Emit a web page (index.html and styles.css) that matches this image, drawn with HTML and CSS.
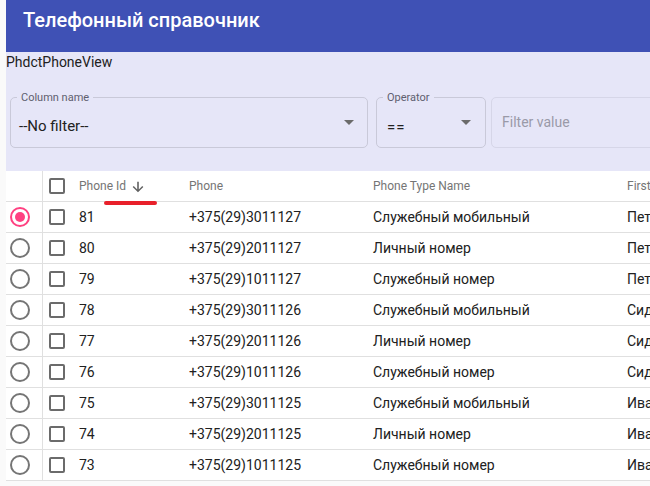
FILE: index.html
```html
<!DOCTYPE html>
<html lang="ru">
<head>
<meta charset="utf-8">
<link rel="stylesheet" href="styles.css">
</head>
<body>
<div class="page">
  <header class="toolbar"><h1 class="title">Телефонный справочник</h1></header>
  <section class="filters">
    <div class="view-name">PhdctPhoneView</div>
    <div class="filter-row">
      <div class="field field-column">
        <span class="field-label">Column name</span>
        <span class="field-value">--No filter--</span>
        <span class="caret"></span>
      </div>
      <div class="field field-operator">
        <span class="field-label">Operator</span>
        <span class="field-value">==</span>
        <span class="caret"></span>
      </div>
      <div class="field field-filter">
        <span class="placeholder">Filter value</span>
      </div>
    </div>
  </section>
  <div class="table-wrap">
    <table class="grid">
      <colgroup>
        <col class="c-radio"><col class="c-check"><col class="c-id"><col class="c-phone"><col class="c-type"><col class="c-first">
      </colgroup>
      <thead>
        <tr>
          <th class="radio-cell"></th>
          <th class="check-cell"><span class="checkbox"></span></th>
          <th><span class="sort">Phone Id
            <svg class="sort-arrow" viewBox="0 0 24 24" width="16" height="16"><path d="M20 12l-1.6-1.6L13.2 15.6V4h-2.4v11.6L5.6 10.4 4 12l8 8 8-8z" fill="#616161"/></svg></span></th>
          <th>Phone</th>
          <th>Phone Type Name</th>
          <th>First</th>
        </tr>
      </thead>
      <tbody>
        <tr><td class="radio-cell"><span class="radio checked"></span></td><td class="check-cell"><span class="checkbox"></span></td><td>81</td><td>+375(29)3011127</td><td>Служебный мобильный</td><td>Пет</td></tr>
        <tr><td class="radio-cell"><span class="radio"></span></td><td class="check-cell"><span class="checkbox"></span></td><td>80</td><td>+375(29)2011127</td><td>Личный номер</td><td>Пет</td></tr>
        <tr><td class="radio-cell"><span class="radio"></span></td><td class="check-cell"><span class="checkbox"></span></td><td>79</td><td>+375(29)1011127</td><td>Служебный номер</td><td>Пет</td></tr>
        <tr><td class="radio-cell"><span class="radio"></span></td><td class="check-cell"><span class="checkbox"></span></td><td>78</td><td>+375(29)3011126</td><td>Служебный мобильный</td><td>Сид</td></tr>
        <tr><td class="radio-cell"><span class="radio"></span></td><td class="check-cell"><span class="checkbox"></span></td><td>77</td><td>+375(29)2011126</td><td>Личный номер</td><td>Сид</td></tr>
        <tr><td class="radio-cell"><span class="radio"></span></td><td class="check-cell"><span class="checkbox"></span></td><td>76</td><td>+375(29)1011126</td><td>Служебный номер</td><td>Сид</td></tr>
        <tr><td class="radio-cell"><span class="radio"></span></td><td class="check-cell"><span class="checkbox"></span></td><td>75</td><td>+375(29)3011125</td><td>Служебный мобильный</td><td>Ива</td></tr>
        <tr><td class="radio-cell"><span class="radio"></span></td><td class="check-cell"><span class="checkbox"></span></td><td>74</td><td>+375(29)2011125</td><td>Личный номер</td><td>Ива</td></tr>
        <tr><td class="radio-cell"><span class="radio"></span></td><td class="check-cell"><span class="checkbox"></span></td><td>73</td><td>+375(29)1011125</td><td>Служебный номер</td><td>Ива</td></tr>
      </tbody>
    </table>
    <span class="mark"></span>
  </div>
</div>
</body>
</html>
```
FILE: styles.css
```css
html, body {
  margin: 0;
  padding: 0;
  height: 100%;
  overflow: hidden;
  background: #fafafa;
  font-family: Roboto, "Noto Sans", sans-serif;
}
.page {
  margin-left: 6px;
  width: 644px;
  overflow: hidden;
}
.toolbar {
  background: #3f51b5;
  height: 52px;
  padding: 8px 17px 0;
  box-sizing: border-box;
}
.title {
  margin: 0;
  color: #fff;
  font-size: 20px;
  font-weight: 500;
  line-height: 24px;
}
.filters {
  background: #e6e6f8;
  height: 119px;
  box-sizing: border-box;
  padding-top: 2px;
}
.view-name {
  font-size: 14px;
  line-height: 16px;
  color: #212121;
}
.filter-row {
  display: flex;
  gap: 5px;
  margin-top: 27px;
  padding-left: 4px;
}
.field {
  position: relative;
  height: 51px;
  border: 1px solid #c9c9d9;
  border-radius: 5px;
  box-sizing: border-box;
  flex: none;
}
.field-column { width: 358px; }
.field-operator { width: 110px; margin-left: 3px; }
.field-filter { width: 200px; border-color: #d6d6e8; }
.field-label {
  position: absolute;
  top: -7px;
  left: 6px;
  padding: 0 4px;
  background: #e6e6f8;
  font-size: 11px;
  line-height: 14px;
  color: #5f5f6f;
}
.field-value {
  position: absolute;
  left: 8px;
  top: 19px;
  font-size: 15px;
  line-height: 18px;
  color: #212121;
}
.field-operator .field-value { left: 10px; top: 20px; letter-spacing: 1px; }
.caret {
  position: absolute;
  right: 13px;
  top: 22px;
  width: 0;
  height: 0;
  border-left: 5px solid transparent;
  border-right: 5px solid transparent;
  border-top: 5px solid #6b6b6b;
}
.field-operator .caret { right: 14px; }
.placeholder {
  position: absolute;
  left: 10px;
  top: 16px;
  font-size: 14px;
  line-height: 16px;
  color: #9a9aa8;
}
.table-wrap {
  position: relative;
  background: #fff;
}
.grid {
  border-collapse: collapse;
  table-layout: fixed;
  width: 821px;
}
.c-radio { width: 36px; }
.c-check { width: 37px; }
.c-id { width: 110px; }
.c-phone { width: 184px; }
.c-type { width: 254px; }
.c-first { width: 200px; }
.grid th, .grid td {
  height: 30px;
  padding: 0;
  border-bottom: 1px solid #e0e0e0;
  text-align: left;
  white-space: nowrap;
  vertical-align: middle;
}
.grid th {
  font-size: 12px;
  font-weight: 400;
  color: #757575;
}
.grid td {
  font-size: 14px;
  color: #212121;
}
.radio-cell {
  border-right: 1px solid #e0e0e0;
  text-align: center;
}
.check-cell { padding-left: 6px !important; }
.radio {
  display: block;
  margin-left: 4px;
  width: 20px;
  height: 20px;
  border: 2px solid #757575;
  border-radius: 50%;
  box-sizing: border-box;
  position: relative;
}
.radio.checked { border-color: #ff4081; }
.radio.checked::after {
  content: "";
  position: absolute;
  left: 3px;
  top: 3px;
  width: 10px;
  height: 10px;
  border-radius: 50%;
  background: #ff4081;
}
.checkbox {
  display: block;
  width: 16px;
  height: 16px;
  border: 2px solid #6b6b6b;
  border-radius: 2px;
  box-sizing: border-box;
}
.sort {
  display: inline-flex;
  align-items: center;
  gap: 4px;
}
.sort-arrow { margin-top: 1px; }
.mark {
  position: absolute;
  left: 98px;
  top: 30px;
  width: 53px;
  height: 4px;
  border-radius: 2px;
  background: #e8202a;
}
```
